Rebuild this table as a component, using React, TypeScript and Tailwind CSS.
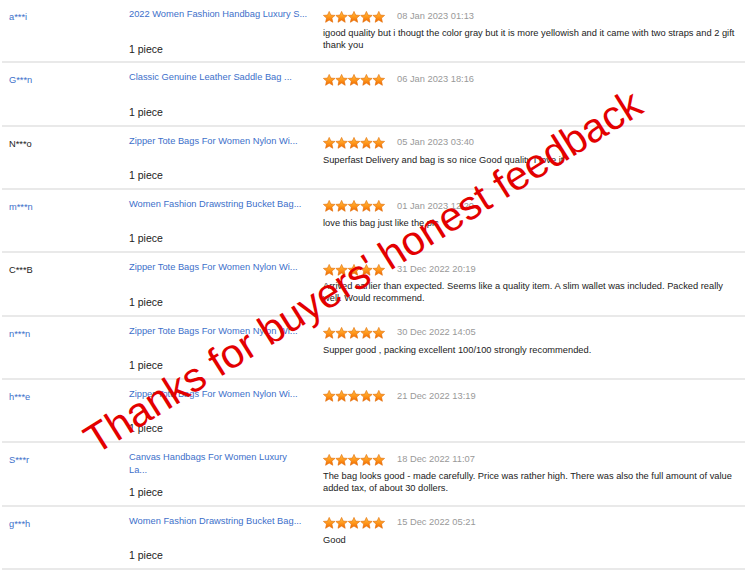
import React from "react";

type Row = {
  name: string;
  dark?: boolean;
  title: string;
  date: string;
  comment?: string;
};

const rows: Row[] = [
  {
    name: "a***i",
    title: "2022 Women Fashion Handbag Luxury S...",
    date: "08 Jan 2023 01:13",
    comment:
      "igood quality but i thougt the color gray but it is more yellowish and it came with two straps and 2 gift thank you",
  },
  { name: "G***n", title: "Classic Genuine Leather Saddle Bag ...", date: "06 Jan 2023 18:16" },
  {
    name: "N***o",
    dark: true,
    title: "Zipper Tote Bags For Women Nylon Wi...",
    date: "05 Jan 2023 03:40",
    comment: "Superfast Delivery and bag is so nice Good quality I love it",
  },
  {
    name: "m***n",
    title: "Women Fashion Drawstring Bucket Bag...",
    date: "01 Jan 2023 12:20",
    comment: "love this bag just like the pic",
  },
  {
    name: "C***B",
    dark: true,
    title: "Zipper Tote Bags For Women Nylon Wi...",
    date: "31 Dec 2022 20:19",
    comment:
      "Arrived earlier than expected. Seems like a quality item. A slim wallet was included. Packed really well. Would recommend.",
  },
  {
    name: "n***n",
    title: "Zipper Tote Bags For Women Nylon Wi...",
    date: "30 Dec 2022 14:05",
    comment: "Supper good , packing excellent 100/100 strongly recommended.",
  },
  { name: "h***e", title: "Zipper Tote Bags For Women Nylon Wi...", date: "21 Dec 2022 13:19" },
  {
    name: "S***r",
    title: "Canvas Handbags For Women Luxury\nLa...",
    date: "18 Dec 2022 11:07",
    comment:
      "The bag looks good - made carefully. Price was rather high. There was also the full amount of value added tax, of about 30 dollers.",
  },
  {
    name: "g***h",
    title: "Women Fashion Drawstring Bucket Bag...",
    date: "15 Dec 2022 05:21",
    comment: "Good",
  },
];

const starPath =
  "M6.2 0.4 L7.9 4.1 L12 4.4 L8.9 7.1 L9.8 11.3 L6.2 9.1 L2.6 11.3 L3.5 7.1 L0.4 4.4 L4.5 4.1 Z";

function Stars() {
  return (
    <svg width="62" height="12" viewBox="0 0 62 12" className="shrink-0">
      <defs>
        <linearGradient id="sg" x1="0" y1="0" x2="0" y2="1">
          <stop offset="0" stopColor="#ffc04a" />
          <stop offset="0.5" stopColor="#ff981c" />
          <stop offset="1" stopColor="#f06800" />
        </linearGradient>
      </defs>
      {[0, 1, 2, 3, 4].map((i) => (
        <path
          key={i}
          d={starPath}
          transform={`translate(${i * 12.4} 0)`}
          fill="url(#sg)"
          stroke="#e06a00"
          strokeWidth="0.6"
          strokeLinejoin="round"
        />
      ))}
    </svg>
  );
}

export default function App() {
  return (
    <div
      className="relative w-[750px] h-[572px] overflow-hidden bg-white"
      style={{ fontFamily: '"Liberation Sans", Arial, sans-serif' }}
    >
      <div className="ml-[2px] w-[743px]">
        {rows.map((r, idx) => (
          <div
            key={idx}
            className="flex h-[63.33px] border-b-2 border-[#e9e9e9]"
          >
            <div
              className={`w-[127px] pl-[7px] pt-[11px] text-[9.3px] leading-[12px] ${
                r.dark ? "text-[#222]" : "text-[#3d6fca]"
              }`}
            >
              {r.name}
            </div>
            <div className="w-[194px] pt-[8px] flex flex-col">
              <div className="h-[34.5px] w-[186px] whitespace-pre-line text-[9.3px] leading-[12.5px] text-[#3d6fca]">
                {r.title}
              </div>
              <div className="text-[10.5px] leading-[13px] text-[#222]">1 piece</div>
            </div>
            <div className="flex-1 pt-[10px] pr-[8px]">
              <div className="flex items-center h-[13px]">
                <Stars />
                <span className="ml-[12px] text-[9.3px] text-[#999]">{r.date}</span>
              </div>
              {r.comment && (
                <div className="mt-[4px] text-[9.3px] leading-[12px] text-[#222]">
                  {r.comment}
                </div>
              )}
            </div>
          </div>
        ))}
      </div>
      <div
        className="pointer-events-none absolute left-[96px] top-[421px] whitespace-nowrap text-[41px] leading-none text-[#e30000] origin-[0px_35px] -rotate-[32deg]"
      >
        Thanks for buyers' honest feedback
      </div>
    </div>
  );
}
